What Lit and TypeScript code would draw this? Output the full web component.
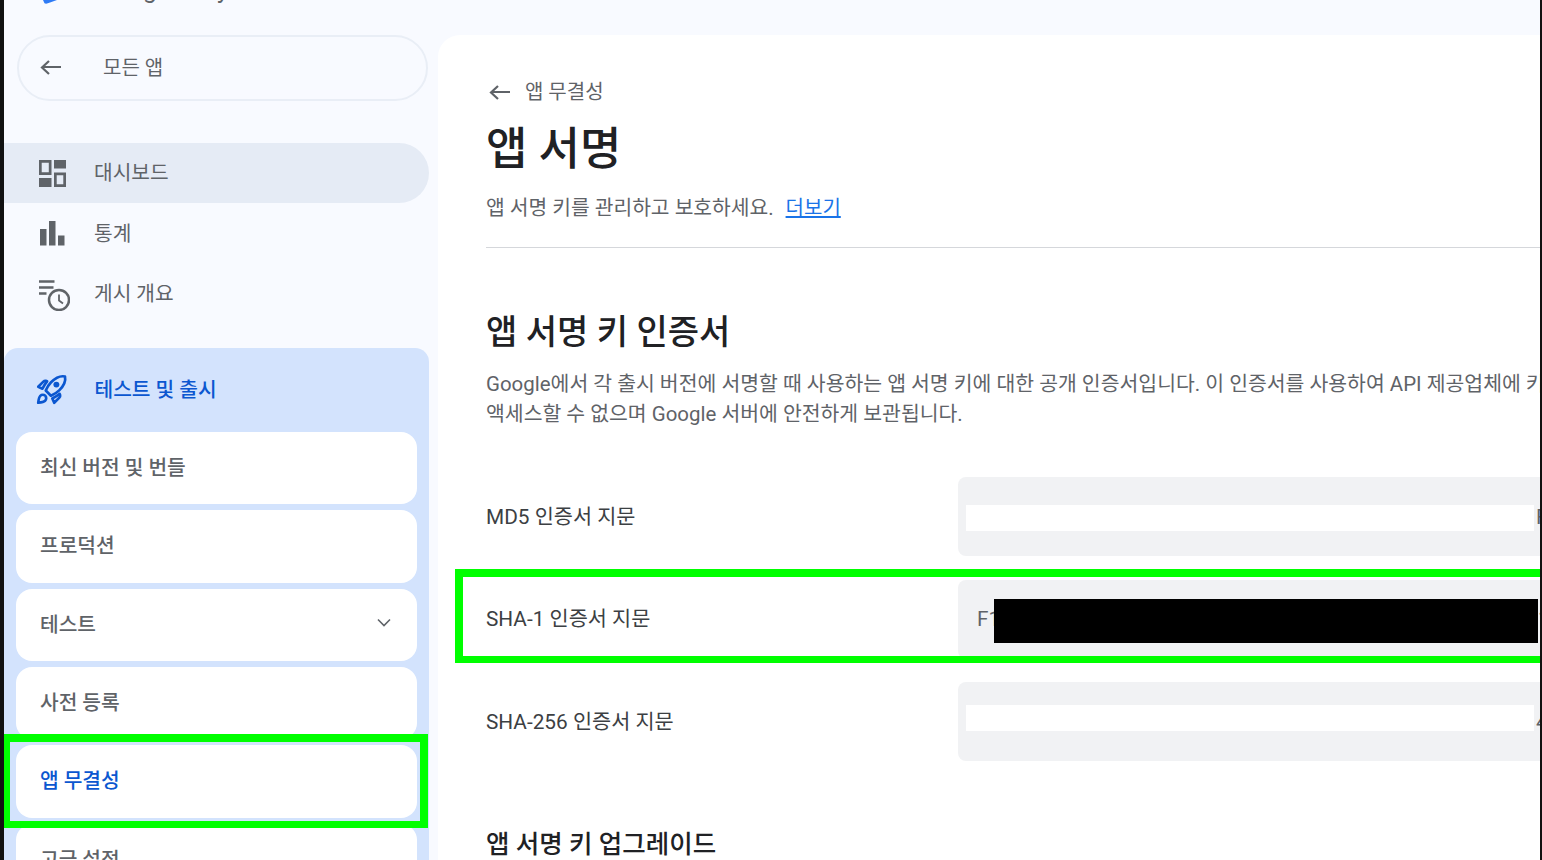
import { LitElement, html, css, svg } from "lit";
import { customElement } from "lit/decorators.js";

const back = svg`<path d="M21 7H2.5M9 1L2 7.5 9 14" fill="none" stroke="currentColor" stroke-width="2.2"/>`;

@customElement("app-root")
export class AppRoot extends LitElement {
  static styles = css`
    :host {
      display: block;
      width: 1542px;
      height: 860px;
      overflow: hidden;
      font-family: Roboto, "Noto Sans CJK KR", sans-serif;
      font-size: 20px;
      color: #5f6368;
    }
    .frame {
      display: grid;
      grid-template-columns: 4px 434px 1fr 2px;
      height: 860px;
      background: #f8faff;
    }
    .strip { background: #111; }
    .side { position: relative; height: 860px; overflow: hidden; }
    .brand {
      height: 35px;
      overflow: hidden;
      display: flex;
      align-items: flex-start;
    }
    .logo { display: block; margin-left: 34px; flex: none; }
    .brand-name {
      margin: -22px 0 0 40px;
      font-size: 24.7px;
      line-height: 24px;
      white-space: nowrap;
    }
    .pill {
      box-sizing: border-box;
      margin-left: 13px;
      width: 411px;
      height: 66px;
      border: 2.5px solid #e9eef6;
      border-radius: 33px;
      display: flex;
      align-items: center;
      padding: 0 0 3px 21px;
      gap: 41px;
    }
    .pill svg { margin-top: 2px; }
    .nav { margin-top: 42px; }
    .row {
      width: 425px;
      height: 60px;
      box-sizing: border-box;
      padding-left: 30px;
      display: flex;
      align-items: center;
      gap: 24px;
      border-radius: 0 30px 30px 0;
      font-size: 20.3px;
      line-height: 28px;
    }
    .row.on { background: #e5ebf5; }
    .row svg { flex: none; display: block; }
    .row span { padding-top: 1px; }
    .row.on span { padding-top: 0; }
    .group {
      margin-top: 25px;
      width: 425px;
      height: 520px;
      background: #d3e3fd;
      border-radius: 14px 14px 0 0;
    }
    .group-head {
      height: 84px;
      box-sizing: border-box;
      padding: 0 0 5px 30px;
      display: flex;
      align-items: center;
      gap: 24.5px;
      color: #0b57d0;
      font-size: 20.3px;
      font-weight: 500;
    }
    .group-head svg { flex: none; display: block; margin-top: 3px; }
    .cards {
      display: flex;
      flex-direction: column;
      gap: 6px;
      padding: 0 12px;
    }
    .card {
      height: 72.33px;
      flex: none;
      box-sizing: border-box;
      background: #fff;
      border-radius: 16px;
      padding: 0 26px 4px 24px;
      display: flex;
      align-items: center;
      justify-content: space-between;
      font-size: 20.3px;
      font-weight: 500;
    }
    .card.on { color: #0b57d0; }
    .mark {
      position: absolute;
      box-sizing: border-box;
      border: solid #00ff00;
      pointer-events: none;
    }
    .mark-a { left: 0; top: 734px; width: 424px; height: 94px; border-width: 8px 8px 7px 6px; }
    .mark-b { left: 17px; right: 0; top: 534px; height: 94px; border-width: 8px 0 7px 8px; }
    .main {
      position: relative;
      margin-top: 35px;
      height: 825px;
      background: #fff;
      border-radius: 22px 0 0 0;
      overflow: hidden;
      padding: 45px 0 0 48px;
      box-sizing: border-box;
    }
    .crumb {
      height: 24px;
      display: flex;
      align-items: center;
      gap: 14px;
      padding-left: 3px;
      line-height: 24px;
      color: #5f6368;
    }
    h1 {
      margin: 18px 0 0;
      font-size: 45px;
      line-height: 56px;
      font-weight: 500;
      color: #202124;
    }
    .sub { margin: 15px 0 0; font-size: 20.35px; line-height: 30px; white-space: nowrap; }
    .sub a { margin-left: 12px; font-size: 20px; color: #1a73e8; text-decoration: underline; }
    .rule { margin-top: 24px; height: 1px; background: #d5d7db; }
    h2 {
      margin: 62px 0 0;
      font-size: 34px;
      line-height: 44px;
      font-weight: 500;
      color: #202124;
    }
    .desc { margin: 15px 0 0; font-size: 20.47px; line-height: 30px; white-space: nowrap; }
    .rows {
      margin-top: 48px;
      display: flex;
      flex-direction: column;
      gap: 23.5px;
    }
    .cert {
      display: grid;
      grid-template-columns: 472px 1fr;
      align-items: center;
      height: 79px;
      color: #3c4043;
    }
    .cert-label { font-size: 20.8px; padding-bottom: 4px; }
    .box {
      height: 79px;
      background: #f1f2f4;
      border-radius: 8px 0 0 8px;
      display: flex;
      align-items: center;
      overflow: hidden;
      white-space: nowrap;
      color: #5f6368;
      font-size: 20.8px;
    }
    .mask { flex: none; width: 568px; height: 26px; background: #fff; margin: 3px 2px 0 8px; }
    .mask.up { margin: 0 2px 7px 8px; }
    .lead { flex: none; width: 17px; margin-left: 19px; overflow: hidden; }
    .bar { flex: none; width: 544px; height: 44px; background: #000; margin-top: 3px; }
    h3 {
      margin: 63px 0 0;
      font-size: 25.5px;
      line-height: 40px;
      font-weight: 500;
      color: #202124;
    }
  `;

  private card(label: string, extra: unknown = null, on = false) {
    return html`<div class="card ${on ? "on" : ""}"><span>${label}</span>${extra}</div>`;
  }

  private cert(label: string, box: unknown) {
    return html`<div class="cert"><span class="cert-label">${label}</span><div class="box">${box}</div></div>`;
  }

  render() {
    const chevron = html`<svg width="14" height="9" viewBox="0 0 14 9"><path d="M1 1.5l6 6 6-6" fill="none" stroke="#5f6368" stroke-width="1.6"/></svg>`;
    return html`
      <div class="frame">
        <div class="strip"></div>
        <aside class="side">
          <div class="brand">
            <svg class="logo" width="20" height="4" viewBox="0 0 20 4"><path d="M5 0h14L12 2.600Q8 4.400 6.500 3.200Z" fill="#2f7bf5"/></svg>
            <span class="brand-name">Google Play Console</span>
          </div>
          <div class="pill">
            <svg width="22" height="15" viewBox="0 0 22 15" style="color:#5f6368">${back}</svg>
            <span>모든 앱</span>
          </div>
          <nav class="nav">
            <div class="row on">
              <svg width="36" height="36" viewBox="0 0 36 36" fill="#5f6368">
                <path fill-rule="evenodd" d="M5 5h12.500v15H5zM7.700 7.700v9.600h7.100V7.700z"/>
                <path d="M20 5h12v8.500H20zM5 23h12.500v9H5z"/>
                <path fill-rule="evenodd" d="M20 17.500h12V32H20zM22.700 20.200v9.100h6.600v-9.100z"/>
              </svg>
              <span>대시보드</span>
            </div>
            <div class="row">
              <svg width="36" height="36" viewBox="0 0 36 36" fill="#5f6368">
                <path d="M6 14h6.500v16.500H6zM15 6h6.500v24.500H15zM24 20.500h6.500v10H24z"/>
              </svg>
              <span>통계</span>
            </div>
            <div class="row">
              <svg width="36" height="36" viewBox="0 0 36 36" fill="none" stroke="#5f6368">
                <path d="M5 6.500h15.500M5 12.500h14.500M5 18.500h7.500" stroke-width="2.300"/>
                <circle cx="25" cy="25" r="10" stroke-width="2.500"/>
                <path d="M25 19.500v6l4 3" stroke-width="1.800"/>
              </svg>
              <span>게시 개요</span>
            </div>
          </nav>
          <section class="group">
            <div class="group-head">
              <svg width="36" height="36" viewBox="0.500 0.500 23 23" fill="none" stroke="#0b57d0" stroke-width="1.700" stroke-linejoin="round">
                <path d="M8.900 7.100c-1.300 1.500-2.500 3.700-3 4.700L3.200 10.600 6.500 7.300c.4-.4 1-.6 1.500-.5z"/>
                <path d="M11.300 16.300s3.300-1.400 5.300-3.400c4.500-4.500 3.900-8 3.700-8.900-.9-.2-4.400-.8-8.900 3.700-2 2-3.400 5.300-3.400 5.300z"/>
                <path d="M16.900 15.100c-1.500 1.300-3.700 2.500-4.700 3l1.200 2.700 3.300-3.300c.4-.4.6-1 .5-1.500z"/>
                <path d="M8.300 17.900c0 .6-.3 1.200-.7 1.600-.9.900-4.400 1.300-4.400 1.300s.4-3.500 1.300-4.400c.4-.4 1-.7 1.600-.7 1.200 0 2.200 1 2.200 2.200z"/>
                <circle cx="14.800" cy="9.200" r="1.900" fill="#0b57d0" stroke="none"/>
              </svg>
              <span>테스트 및 출시</span>
            </div>
            <div class="cards">
              ${this.card("최신 버전 및 번들")}
              ${this.card("프로덕션")}
              ${this.card("테스트", chevron)}
              ${this.card("사전 등록")}
              ${this.card("앱 무결성", null, true)}
              ${this.card("고급 설정")}
            </div>
          </section>
          <div class="mark mark-a"></div>
        </aside>
        <main class="main">
          <div class="crumb">
            <svg width="22" height="15" viewBox="0 0 22 15" style="color:#5f6368">${back}</svg>
            <span>앱 무결성</span>
          </div>
          <h1>앱 서명</h1>
          <p class="sub">앱 서명 키를 관리하고 보호하세요.<a>더보기</a></p>
          <div class="rule"></div>
          <h2>앱 서명 키 인증서</h2>
          <p class="desc">Google에서 각 출시 버전에 서명할 때 사용하는 앱 서명 키에 대한 공개 인증서입니다. 이 인증서를 사용하여 API 제공업체에 키<br />액세스할 수 없으며 Google 서버에 안전하게 보관됩니다.</p>
          <div class="rows">
            ${this.cert("MD5 인증서 지문", html`<span class="mask"></span><span>F</span>`)}
            ${this.cert("SHA-1 인증서 지문", html`<span class="lead">F1</span><span class="bar"></span><span>1</span>`)}
            ${this.cert("SHA-256 인증서 지문", html`<span class="mask up"></span><span>4</span>`)}
          </div>
          <h3>앱 서명 키 업그레이드</h3>
          <div class="mark mark-b"></div>
        </main>
        <div class="strip"></div>
      </div>
    `;
  }
}
